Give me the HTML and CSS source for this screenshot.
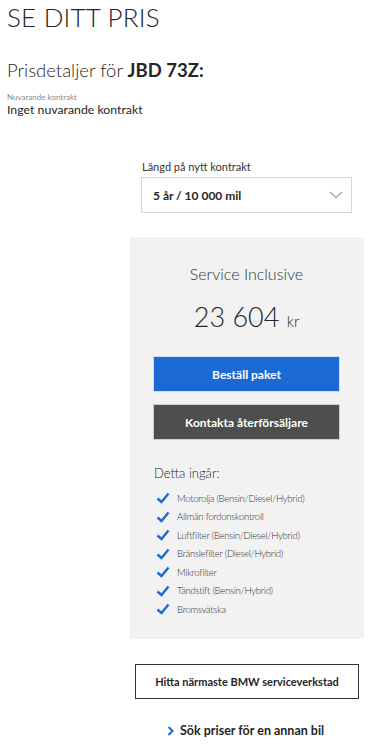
FILE: index.html
```html
<!DOCTYPE html>
<html lang="sv">
<head>
<meta charset="utf-8">
<link rel="stylesheet" href="styles.css">
</head>
<body>
<main class="page">
  <h1 class="title">SE DITT PRIS</h1>
  <h2 class="subtitle">Prisdetaljer för <strong>JBD 73Z:</strong></h2>
  <div class="current">
    <div class="current-label">Nuvarande kontrakt</div>
    <div class="current-value">Inget nuvarande kontrakt</div>
  </div>

  <div class="right-col">
    <label class="select-label">Längd på nytt kontrakt</label>
    <div class="select">
      <span>5 år / 10 000 mil</span>
      <svg class="chev" width="14" height="8" viewBox="0 0 14 8"><path d="M1 1l6 5.5L13 1" fill="none" stroke="#aaa" stroke-width="1.4"/></svg>
    </div>

    <section class="panel">
      <div class="pkg-name">Service Inclusive</div>
      <div class="price">23 604 <span class="cur">kr</span></div>
      <button class="btn btn-blue">Beställ paket</button>
      <button class="btn btn-dark">Kontakta återförsäljare</button>
      <div class="incl-title">Detta ingår:</div>
      <ul class="incl">
        <li><svg viewBox="0 0 14 12" width="14" height="12"><path d="M1.5 6.5l4 3.5L12.5 1.5" fill="none" stroke="#1c69d4" stroke-width="2.4"/></svg>Motorolja (Bensin/Diesel/Hybrid)</li>
        <li><svg viewBox="0 0 14 12" width="14" height="12"><path d="M1.5 6.5l4 3.5L12.5 1.5" fill="none" stroke="#1c69d4" stroke-width="2.4"/></svg>Allmän fordonskontroll</li>
        <li><svg viewBox="0 0 14 12" width="14" height="12"><path d="M1.5 6.5l4 3.5L12.5 1.5" fill="none" stroke="#1c69d4" stroke-width="2.4"/></svg>Luftfilter (Bensin/Diesel/Hybrid)</li>
        <li><svg viewBox="0 0 14 12" width="14" height="12"><path d="M1.5 6.5l4 3.5L12.5 1.5" fill="none" stroke="#1c69d4" stroke-width="2.4"/></svg>Bränslefilter (Diesel/Hybrid)</li>
        <li><svg viewBox="0 0 14 12" width="14" height="12"><path d="M1.5 6.5l4 3.5L12.5 1.5" fill="none" stroke="#1c69d4" stroke-width="2.4"/></svg>Mikrofilter</li>
        <li><svg viewBox="0 0 14 12" width="14" height="12"><path d="M1.5 6.5l4 3.5L12.5 1.5" fill="none" stroke="#1c69d4" stroke-width="2.4"/></svg>Tändstift (Bensin/Hybrid)</li>
        <li><svg viewBox="0 0 14 12" width="14" height="12"><path d="M1.5 6.5l4 3.5L12.5 1.5" fill="none" stroke="#1c69d4" stroke-width="2.4"/></svg>Bromsvätska</li>
      </ul>
    </section>

    <button class="btn-outline">Hitta närmaste BMW serviceverkstad</button>
    <a class="link" href="#"><svg width="8" height="10" viewBox="0 0 8 10"><path d="M1.5 1l4 4-4 4" fill="none" stroke="#1c69d4" stroke-width="2"/></svg>Sök priser för en annan bil</a>
  </div>
</main>
</body>
</html>
```

FILE: styles.css
```css
* { box-sizing: border-box; }
html, body { margin: 0; padding: 0; background: #fff; }
body {
  font-family: Lato, "Noto Sans", "Liberation Sans", sans-serif;
  color: #262626;
}
.page {
  width: 372px;
  padding: 0 0 0 7px;
  display: flex;
  flex-direction: column;
}
.title {
  margin: 2px 0 0 0;
  font-size: 26px;
  font-weight: 300;
  line-height: 30px;
  letter-spacing: 0.2px;
}
.subtitle {
  margin: 27px 0 0 0;
  font-size: 18.5px;
  font-weight: 300;
  line-height: 22px;
}
.subtitle strong { font-weight: 700; }
.current { margin-top: 11px; }
.current-label {
  font-size: 8px;
  color: #8a8a8a;
  line-height: 10px;
}
.current-value {
  font-size: 12.3px;
  line-height: 14px;
  margin-top: 1px;
}
.right-col {
  margin: 43px 0 0 123px;
  width: 234px;
  display: flex;
  flex-direction: column;
}
.select-label {
  font-size: 11px;
  line-height: 14px;
  margin-left: 12px;
  color: #333;
}
.select {
  margin: 3px 0 0 11px;
  width: 211px;
  height: 36px;
  border: 1px solid #d6d6d6;
  display: flex;
  align-items: center;
  justify-content: space-between;
  padding: 0 8px 0 11px;
  font-size: 12px;
  font-weight: 700;
}
.panel {
  margin-top: 24px;
  background: #f2f2f2;
  height: 402px;
  padding: 27px 24px 0 23px;
  display: flex;
  flex-direction: column;
}
.pkg-name {
  text-align: center;
  font-size: 16px;
  font-weight: 300;
  line-height: 20px;
  color: #333;
}
.price {
  text-align: center;
  margin-top: 16px;
  font-size: 27px;
  font-weight: 300;
  line-height: 34px;
  color: #262626;
}
.price .cur { font-size: 15px; font-weight: 300; }
.btn {
  display: block;
  width: 187px;
  height: 36px;
  border: 1px solid;
  font-family: inherit;
  font-size: 12px;
  font-weight: 700;
  color: #fff;
  padding: 0;
}
.btn-blue {
  margin-top: 18px;
  background: #1c69d4;
  border-color: #d0def2;
}
.btn-dark {
  margin-top: 12px;
  background: #4e4e4e;
  border-color: #cfcfcf;
}
.incl-title {
  margin-top: 24px;
  margin-left: 1px;
  font-size: 13px;
  font-weight: 300;
  line-height: 18px;
}
.incl {
  list-style: none;
  margin: 7px 0 0 0;
  padding: 0 0 0 3px;
}
.incl li {
  display: flex;
  align-items: center;
  gap: 7px;
  height: 18.5px;
  font-size: 9.6px;
  letter-spacing: -0.3px;
  font-weight: 300;
  color: #333;
}
.btn-outline {
  margin: 25px 0 0 5px;
  width: 224px;
  height: 35px;
  border: 1px solid #333;
  background: #fff;
  font-family: inherit;
  font-size: 11px;
  font-weight: 700;
  color: #262626;
  padding: 0;
}
.link {
  margin: 24px 0 0 37px;
  display: flex;
  align-items: center;
  gap: 5px;
  font-size: 12.5px;
  font-weight: 700;
  color: #262626;
  text-decoration: none;
}
```
